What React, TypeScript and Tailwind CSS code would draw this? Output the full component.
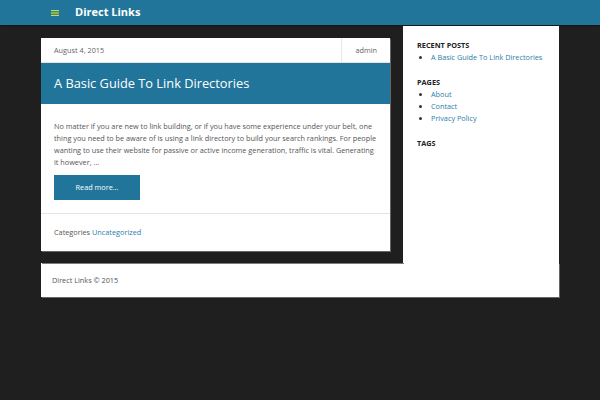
const links = ['About', 'Contact', 'Privacy Policy']

function Header() {
  return (
    <header className="h-[25px] bg-[#21759b] shadow-[0_1px_2px_rgba(0,0,0,0.4)]">
      <div className="ml-[51px] flex h-full items-center gap-[16px]">
        <svg width="8" height="6" viewBox="0 0 8 6" className="mt-[1px]">
          <rect y="0" width="8" height="1.2" fill="#c9dc3c" />
          <rect y="2.4" width="8" height="1.2" fill="#c9dc3c" />
          <rect y="4.8" width="8" height="1.2" fill="#c9dc3c" />
        </svg>
        <span className="-mt-[1px] text-[11px] font-bold text-white">Direct Links</span>
      </div>
    </header>
  )
}

function Post() {
  return (
    <article className="bg-white shadow-[1px_1px_0_rgba(120,120,120,0.8)]">
      <div className="flex h-[25px] items-center justify-between border-b border-[#e4e4e4] text-[7.3px] text-[#666]">
        <span className="pl-[13px]">August 4, 2015</span>
        <span className="flex h-full items-center border-l border-[#e8e8e8] px-[13px]">admin</span>
      </div>
      <h1 className="flex h-[41px] items-center bg-[#21759b] px-[13px] text-[12.8px] text-white">
        A Basic Guide To Link Directories
      </h1>
      <div className="px-[13px] pb-[13px] pt-[16px]">
        <p className="whitespace-nowrap text-[7.3px] leading-[12px] text-[#555]">
          No matter if you are new to link building, or if you have some experience under your belt, one
          <br />
          thing you need to be aware of is using a link directory to build your search rankings. For people
          <br />
          wanting to use their website for passive or active income generation, traffic is vital. Generating
          <br />
          it however, …
        </p>
        <a className="mt-[7px] flex h-[25px] w-[86px] items-center justify-center bg-[#21759b] text-[7.3px] text-white">
          Read more…
        </a>
      </div>
      <div className="flex h-[38px] items-center border-t border-[#e4e4e4] px-[13px] text-[7.3px] text-[#555]">
        Categories&nbsp;<a className="text-[#2a7ea8]">Uncategorized</a>
      </div>
    </article>
  )
}

function Sidebar() {
  return (
    <aside className="w-[156px] bg-white px-[14px] pt-[14px] text-[7.3px]">
      <h2 className="font-bold text-[#222]">RECENT POSTS</h2>
      <ul className="list-disc pl-[14px] leading-[12px] text-[#2a7ea8] marker:text-[#333]">
        <li>A Basic Guide To Link Directories</li>
      </ul>
      <h2 className="mt-[14px] font-bold text-[#222]">PAGES</h2>
      <ul className="list-disc pl-[14px] leading-[12px] text-[#2a7ea8] marker:text-[#333]">
        {links.map((l) => (
          <li key={l}>{l}</li>
        ))}
      </ul>
      <h2 className="mt-[14px] font-bold text-[#222]">TAGS</h2>
    </aside>
  )
}

export default function App() {
  return (
    <div className="min-h-[400px] bg-[#1f1f1f] font-['Open_Sans',sans-serif]">
      <Header />
      <div className="mx-[41px] mt-[1px] w-[518px]">
        <div className="flex">
          <main className="w-[362px] pb-[12px] pr-[13px] pt-[12px] shadow-[1px_1px_0_rgba(90,90,90,0.8)]">
            <Post />
          </main>
          <Sidebar />
        </div>
        <footer className="flex h-[34px] items-center bg-white px-[11px] text-[7.3px] text-[#555] shadow-[1px_1px_0_rgba(120,120,120,0.8)]">
          Direct Links © 2015
        </footer>
      </div>
    </div>
  )
}
